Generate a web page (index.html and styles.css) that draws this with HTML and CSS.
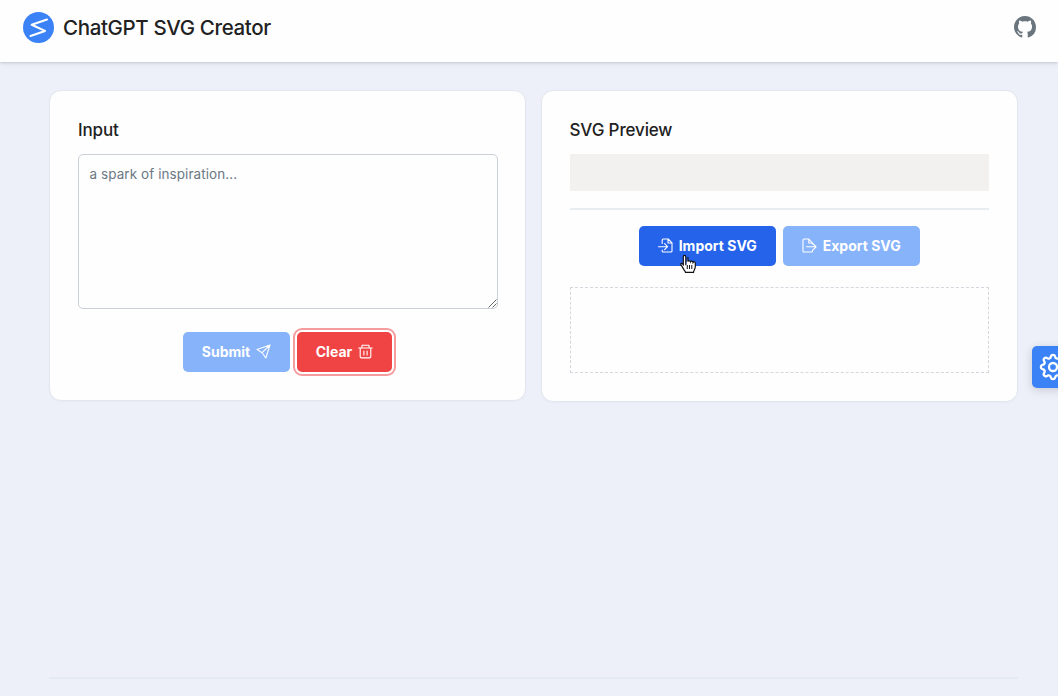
FILE: index.html
```html
<!DOCTYPE html>
<html lang="en">
<head>
<meta charset="utf-8">
<title>ChatGPT SVG Creator</title>
<link rel="stylesheet" href="styles.css">
</head>
<body>
<header class="header">
  <div class="brand">
    <svg class="logo" viewBox="0 0 31 31"><circle cx="15.5" cy="15.5" r="15.5" fill="#3b82f6"/><path d="M24 7.5 8.7 12.8 22 18.9 7.5 23.9" fill="none" stroke="#fff" stroke-width="2.1" stroke-linecap="round" stroke-linejoin="round"/></svg>
    <h1 class="title">ChatGPT SVG Creator</h1>
  </div>
  <svg class="github" viewBox="0 0 16 16"><path fill="#6b757e" d="M8 0C3.58 0 0 3.58 0 8c0 3.54 2.29 6.53 5.47 7.59.4.07.55-.17.55-.38 0-.19-.01-.82-.01-1.49-2.01.37-2.53-.49-2.69-.94-.09-.23-.48-.94-.82-1.13-.28-.15-.68-.52-.01-.53.63-.01 1.08.58 1.23.82.72 1.21 1.87.87 2.33.66.07-.52.28-.87.51-1.07-1.78-.2-3.64-.89-3.64-3.95 0-.87.31-1.59.82-2.15-.08-.2-.36-1.02.08-2.12 0 0 .67-.21 2.2.82.64-.18 1.32-.27 2-.27s1.36.09 2 .27c1.53-1.04 2.2-.82 2.2-.82.44 1.1.16 1.92.08 2.12.51.56.82 1.27.82 2.15 0 3.07-1.87 3.75-3.65 3.95.29.25.54.73.54 1.48 0 1.07-.01 1.93-.01 2.2 0 .21.15.46.55.38A8.01 8.01 0 0 0 16 8c0-4.42-3.58-8-8-8z"/></svg>
</header>
<main class="main">
  <section class="card card-input">
    <h2 class="heading">Input</h2>
    <div class="textarea"><span class="placeholder">a spark of inspiration...</span>
      <svg class="grip" viewBox="0 0 9 9"><path d="M.5 8.5l8-8M4.5 8.5l4-4" stroke="#666" stroke-width="1"/></svg>
    </div>
    <div class="actions">
      <button class="btn submit"><span class="label">Submit</span>
        <svg class="icon" viewBox="0 0 15 15"><path d="M14 1 .9 5.4l5.2 3.3L9.8 14zM14 1 6.1 8.7"/></svg></button>
      <button class="btn clear"><span class="label">Clear</span>
        <svg class="icon" viewBox="0 0 15 15"><path d="M.8 4h13.4M3.7 3.8 4.2 1.2h6.6l.5 2.6M2.2 4v8.7q0 1.2 1.2 1.2h8.2q1.2 0 1.2-1.2V4M5.9 7v4M9.1 7v4"/></svg></button>
    </div>
  </section>
  <section class="card card-preview">
    <h2 class="heading heading-preview">SVG Preview</h2>
    <div class="preview"></div>
    <div class="rule"></div>
    <div class="file-actions">
      <button class="btn import">
        <svg class="icon" viewBox="0 0 15 15"><path d="M4.2 5.5V2q0-1 1-1h5L14 4.8V13q0 1-1 1H5.2q-1 0-1-1v-1M10 1.2V5h3.8M.5 8.7h8.7M6.6 5.7l3 3-3 3"/></svg>
        <span class="label">Import SVG</span></button>
      <button class="btn export">
        <svg class="icon" viewBox="0 0 15 15"><path d="M10.5 5 6.8 1H2Q1 1 1 2v11q0 1 1 1h7.5q1 0 1-1v-1M6.8 1.2V5h3.7v1M4.5 8.8H14M11.3 6l2.8 2.8-2.8 2.8"/></svg>
        <span class="label">Export SVG</span></button>
    </div>
    <div class="dropzone"></div>
  </section>
</main>
<footer class="footer"></footer>
<button class="settings"><svg class="gear" viewBox="0 0 28 28"><path d="M11.9 3.4A2.2 2.2 0 0 1 16.1 3.4A2.3 2.3 0 0 0 20 5A2.2 2.2 0 0 1 23 8A2.3 2.3 0 0 0 24.6 11.9A2.2 2.2 0 0 1 24.6 16.1A2.3 2.3 0 0 0 23 20A2.2 2.2 0 0 1 20 23A2.3 2.3 0 0 0 16.1 24.6A2.2 2.2 0 0 1 11.9 24.6A2.3 2.3 0 0 0 8 23A2.2 2.2 0 0 1 5 20A2.3 2.3 0 0 0 3.4 16.1A2.2 2.2 0 0 1 3.4 11.9A2.3 2.3 0 0 0 5 8A2.2 2.2 0 0 1 8 5A2.3 2.3 0 0 0 11.9 3.4Z"/><circle cx="14" cy="14" r="4"/></svg></button>
<svg class="cursor" viewBox="0 0 17 19"><path d="M5.2 10.8V2.4c0-2-2.5-2-2.5-.1v7.9L1.8 9.3C.5 8.3-.6 9.7.8 11l2.8 4.6c.5.7 1.1 1.1 1.3 2.3h8c.1-1.8 1.8-3.4 1.8-5.8V8.5c0-1.5-1.8-1.7-2.3-.6-.2-1.5-2.1-1.7-2.6-.6-.3-1.3-2.1-1.4-2.5-.3V2.5" transform="translate(.6 .5)" fill="#fff" stroke="#111" stroke-width="1.2"/><path d="M7.3 11v4M9.5 11v4M11.8 11v4" stroke="#111"/></svg>
</body>
</html>
```
FILE: styles.css
```css
* { box-sizing: border-box; }
body { margin: 0; height: 696px; overflow: hidden; display: flex; flex-direction: column; position: relative; background: #edf0f9; color: #212121; font-family: Inter, "Liberation Sans", sans-serif; }
.header { height: 62px; flex: none; display: flex; justify-content: space-between; align-items: flex-start; padding: 11px 22px 0 23px; background: #fefefe; box-shadow: 0 1px 2px #0000001c, 0 2px 6px #00000010; }
.brand { display: flex; align-items: center; gap: 9px; }
.logo { width: 31px; height: 31px; }
.title { margin: 0; font-size: 20.5px; line-height: 31px; font-weight: 450; letter-spacing: -.36px; white-space: nowrap; padding-top: 1px; }
.github { width: 22px; height: 22px; margin-top: 5px; }
.main { display: grid; grid-template-columns: 1fr 1fr; gap: 15px; align-items: start; padding: 28px 40px 0 49px; }
.card { border: 1px solid #e0e7ef; border-radius: 12px; background: #fefefe; padding: 27px 28px; box-shadow: 0 1px 2px #00000006; }
.card-input { height: 310.5px; }
.card-preview { height: 311.5px; padding-left: 27.5px; }
.heading { margin: 0 0 12px; font-size: 17px; line-height: 24px; font-weight: 450; letter-spacing: -.14px; }
.textarea { position: relative; height: 155px; margin-right: -.5px; border: 1px solid #cbd0d8; border-radius: 5px; padding: 9px 10.5px; font-size: 13.5px; line-height: 20px; letter-spacing: .07px; color: #6c7884; }
.grip { position: absolute; right: 0; bottom: 0; width: 9px; height: 9px; }
.actions { display: flex; justify-content: center; gap: 7px; margin: 23px 0 0; }
.btn { font-family: inherit; font-size: 14px; font-weight: 650; color: #fff; height: 39.5px; border: 0; border-radius: 5px; padding: 0; display: flex; justify-content: center; align-items: center; gap: 6px; white-space: nowrap; }
.icon { width: 15px; height: 15px; fill: none; stroke: currentColor; stroke-width: 1.1; stroke-linecap: round; stroke-linejoin: round; }
.submit { width: 107px; background: #87b3fa; }
.clear { width: 95px; background: #f04444; box-shadow: 0 0 0 2px #fff, 0 0 0 4px #f59c9e; }
.preview { height: 37px; background: #f3f1f0; }
.rule { height: 2px; margin-top: 17px; background: #e8edf2; }
.file-actions { display: flex; justify-content: center; gap: 7px; margin-top: 16px; }
.import { width: 137px; background: #2563eb; }
.export { width: 137px; background: #87b3fa; }
.dropzone { height: 86px; margin-top: 21.5px; border: 1px dashed #d4d7dd; }
.footer { margin: auto 40px 17px 49px; height: 2px; flex: none; background: #e5ebf3; }
.settings { position: absolute; left: 1032px; top: 345.5px; width: 42px; height: 42px; padding: 7px; border: 0; border-radius: 5px; background: #3b82f6; box-shadow: 0 2px 10px #00000028; }
.gear { display: block; width: 28px; height: 28px; fill: none; stroke: #fff; stroke-width: 2.3; stroke-linejoin: round; }
.cursor { position: absolute; left: 680px; top: 254px; width: 17px; height: 19px; }
```
